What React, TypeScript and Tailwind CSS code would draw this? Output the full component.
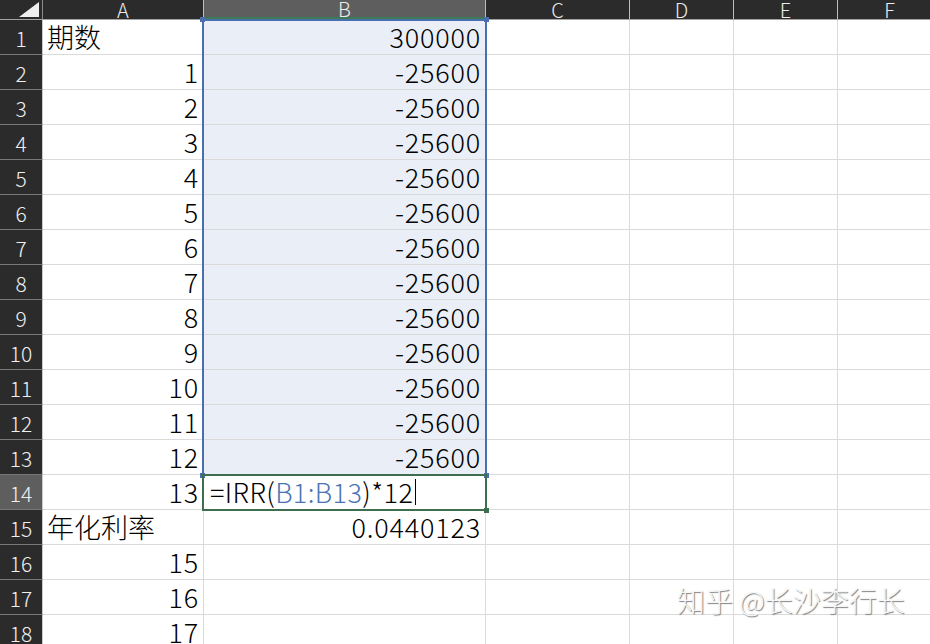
const COLS = [
  { key: 'A', width: 'w-[161px]' },
  { key: 'B', width: 'w-[282px]' },
  { key: 'C', width: 'w-[144px]' },
  { key: 'D', width: 'w-[104px]' },
  { key: 'E', width: 'w-[104px]' },
  { key: 'F', width: 'w-[104px]' },
] as const

type Row = { a?: string; aLeft?: boolean; b?: string; formula?: boolean }

const ROWS: Row[] = [
  { a: '期数', aLeft: true, b: '300000' },
  ...Array.from({ length: 12 }, (_, i) => ({ a: String(i + 1), b: '-25600' })),
  { a: '13', formula: true },
  { a: '年化利率', aLeft: true, b: '0.0440123' },
  { a: '15' },
  { a: '16' },
  { a: '17' },
]

const FONT = "font-['Noto_Sans_CJK_SC','Noto_Sans',sans-serif]"

function Formula() {
  return (
    <span className="flex items-center">
      =IRR(<span className="text-[#4a74b4]">B1:B13</span>)*12
      <span className="ml-[2px] inline-block h-[26px] w-px bg-black" />
    </span>
  )
}

// little square at a corner of a selection frame
function Handle({ pos, color }: { pos: string; color: string }) {
  return <span className={`absolute h-[5px] w-[5px] ${pos} ${color}`} />
}

export default function App() {
  return (
    <div className={`relative h-[644px] w-[930px] overflow-hidden bg-white font-light text-black ${FONT}`}>
      {/* column headers */}
      <div className="flex h-[20px] border-b border-[#a3a3a3] bg-[#2b2b2b]">
        <div className="flex h-full w-[43px] shrink-0 items-end justify-end border-r border-[#8c8c8c] pr-[3px] pb-[2px]">
          <svg width="20" height="15" viewBox="0 0 20 15">
            <polygon points="20,0 20,15 0,15" fill="#efefef" />
          </svg>
        </div>
        {COLS.map((c) => (
          <div
            key={c.key}
            className={`${c.width} flex h-full shrink-0 items-center justify-center border-r border-[#bdbdbd] text-[20px] leading-none text-[#ececec] ${
              c.key === 'B' ? 'border-b-2 border-b-[#3c7a55] bg-[#5e5e5e]' : ''
            }`}
          >
            {c.key}
          </div>
        ))}
      </div>

      {/* rows */}
      {ROWS.map((r, i) => {
        const n = i + 1
        const active = n === 14
        const selected = n <= 13
        return (
          <div key={n} className="flex h-[35px]">
            <div
              className={`flex w-[43px] shrink-0 items-center justify-center border-r border-b border-r-[#c9c9c9] border-b-[#777] pt-[3px] text-[21px] leading-none text-[#f0f0f0] ${
                active ? 'bg-[#5e5e5e] border-r-[#4f8a64]' : 'bg-[#2b2b2b]'
              }`}
            >
              {n}
            </div>
            {COLS.map((c) => (
              <div
                key={c.key}
                className={`${c.width} flex h-full shrink-0 items-end border-r border-b border-[#dadada] px-[4px] pb-[3px] text-[27px] leading-[28px] ${
                  c.key === 'B' && selected ? 'bg-[#e9eef7]' : 'bg-white'
                } ${c.key === 'A' && r.aLeft ? 'justify-start' : 'justify-end tracking-[0.8px]'}`}
              >
                {c.key === 'A' && r.a}
                {c.key === 'B' &&
                  (r.formula ? (
                    <div className="w-full pl-[2px] tracking-[0.4px]">
                      <Formula />
                    </div>
                  ) : (
                    r.b
                  ))}
              </div>
            ))}
          </div>
        )
      })}

      {/* selection B1:B13 */}
      <div className="pointer-events-none absolute top-[19px] left-[202px] h-[457px] w-[285px] border-2 border-[#4a6fae]">
        <Handle pos="-top-[4px] -left-[4px]" color="bg-[#4a6fae]" />
        <Handle pos="-top-[4px] -right-[4px]" color="bg-[#4a6fae]" />
        <Handle pos="-bottom-[4px] -left-[4px]" color="bg-[#4a6fae]" />
        <Handle pos="-bottom-[4px] -right-[4px]" color="bg-[#4a6fae]" />
      </div>
      {/* active cell B14 */}
      <div className="pointer-events-none absolute top-[474px] left-[202px] h-[37px] w-[285px] border-2 border-[#3e6e4e]">
        <Handle pos="-bottom-[4px] -right-[4px]" color="bg-[#3e6e4e]" />
      </div>

      {/* watermark */}
      <div className="pointer-events-none absolute top-[586px] left-[677px] text-[28px] leading-none text-[#f6f6f6] [text-shadow:1px_1px_1px_#7d7d7d]">
        知乎 @长沙李行长
      </div>
    </div>
  )
}
